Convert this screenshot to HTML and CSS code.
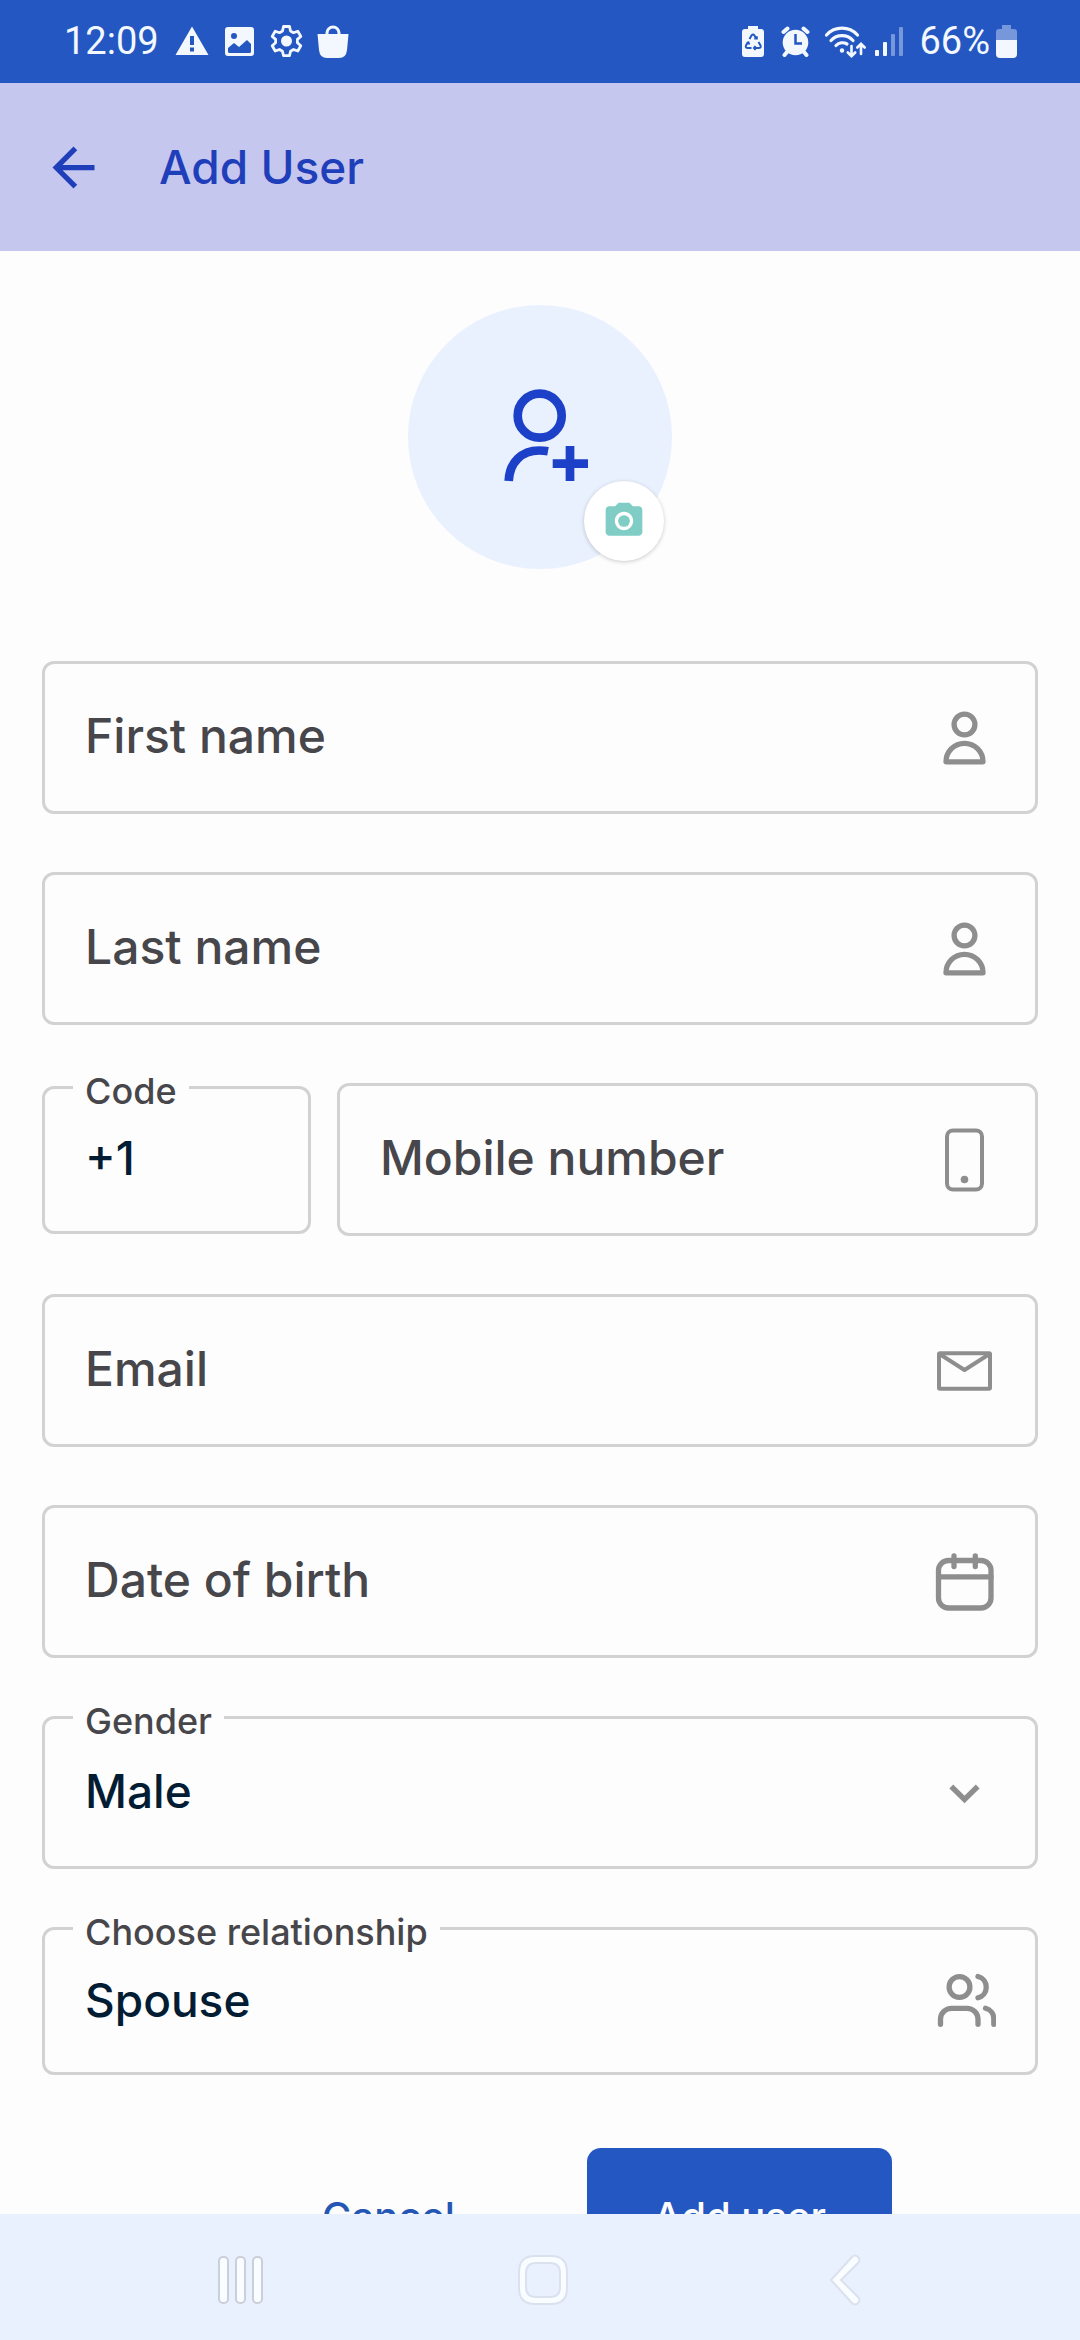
FILE: index.html
```
<!doctype html>
<html lang="en">
  <head>
    <meta charset="UTF-8" />
    <meta name="viewport" content="width=device-width, initial-scale=1.0" />
    <title>Add User</title>
    <link rel="stylesheet" href="styles.css">
  </head>
  <body>
    <div class="status-bar">
      <div class="status-group">
        <span class="clock">12:09</span>
        <svg width="34" height="34" viewBox="0 0 34 34">
          <path fill="currentColor" fill-rule="evenodd" d="M17 2.500 33.500 31H.5zM15 12v9h4v-9zM15 23.500v4h4v-4z" />
        </svg>
        <svg width="34" height="34" viewBox="0 0 34 34">
          <path fill="currentColor" fill-rule="evenodd" d="M6 3h23a3 3 0 0 1 3 3v23a3 3 0 0 1-3 3H6a3 3 0 0 1-3-3V6a3 3 0 0 1 3-3zM12 9a3 3 0 1 0 0 6 3 3 0 0 0 0-6zM6 24v3.500q0 1.500 1.500 1.500h20q1.500 0 1.500-1.500V20l-4-4-8 7-5-4z" />
        </svg>
        <svg width="34" height="34" viewBox="0 0 34 34" fill="none" stroke="currentColor" stroke-linejoin="round">
          <path stroke-width="2.800" d="M14.500 2.500h6l1 4.500 3 1.700 4.300-1.500 3 5.200-3.400 3v3.400l3.400 3-3 5.200-4.300-1.500-3 1.700-1 4.500h-6l-1-4.500-3-1.700-4.300 1.500-3-5.200 3.400-3v-3.400l-3.400-3 3-5.200 4.300 1.500 3-1.700z" />
          <circle cx="17.500" cy="17" r="5.500" fill="currentColor" stroke="none" />
        </svg>
        <svg width="34" height="34" viewBox="0 0 34 34">
          <path fill="currentColor" d="M1.500 10h31l-1.500 16q-.8 8-8 8H11q-7.200 0-8-8z" />
          <path fill="none" stroke="currentColor" stroke-width="3" d="M11 11V9a6 6 0 0 1 12 0v2" />
        </svg>
      </div>
      <div class="status-group right">
        <svg width="28" height="34" viewBox="0 0 28 34">
          <path fill="currentColor" d="M7 2h10v3h3q3 0 3 3v22q0 3-3 3H4q-3 0-3-3V8q0-3 3-3h3z" />
          <path class="cutout" stroke-width="2" d="M8.500 15l2-3.500q1.500-2 3 0l2 3.500M17.500 18l2 3.500q1 2.500-2 2.500H14M10.500 24H7q-3 0-2-2.500L7 18M14.500 22l-1.500 2 1.500 2M5.500 19.500l2-1 .8 2M13.300 14.500h2.500v-2.300" />
        </svg>
        <svg width="30" height="34" viewBox="0 0 30 34">
          <circle cx="14.500" cy="18.500" r="12.800" fill="currentColor" />
          <path fill="none" stroke="currentColor" stroke-width="4" stroke-linecap="round" d="M2.500 8l4-3.500M26.500 8l-4-3.500M6 28l-2.500 3M23 28l2.500 3" />
          <path class="cutout" stroke-width="2.500" d="M14.500 10v9.500h6.500" />
        </svg>
        <svg class="wifi" width="40" height="34" viewBox="0 0 40 34" fill="none" stroke="currentColor" stroke-linecap="round">
          <path stroke-width="3.200" d="M3.500 11a21 21 0 0 1 31 0M8 16.500a15 15 0 0 1 22 0M13 21.500a9 9 0 0 1 11-1.500" />
          <circle cx="19" cy="26.500" r="2.200" fill="currentColor" stroke="none" />
          <path stroke-width="2.600" d="M28.500 22v10M24.800 28.500l3.700 3.700 3.700-3.700M38 30V20M34.300 23.500l3.700-3.700 3.700 3.700" />
        </svg>
        <svg width="32" height="34" viewBox="0 0 32 34" fill="currentColor">
          <rect x="0" y="26" width="4" height="6" rx="1" />
          <rect x="8" y="18" width="4" height="14" rx="1" />
          <rect x="16" y="10" width="4" height="22" rx="1" opacity=".4" />
          <rect x="24" y="3" width="4" height="29" rx="1" opacity=".4" />
        </svg>
        <span class="battery">
          66%
          <svg width="22" height="34" viewBox="0 0 22 34" fill="currentColor">
            <path opacity=".4" d="M6 1h9v4h3q3 0 3 3v8H0V8q0-3 3-3h3z" />
            <path d="M0 16h21v14q0 4-4 4H4q-4 0-4-4z" />
          </svg>
        </span>
      </div>
    </div>

    <header class="app-bar">
      <button class="back" type="button" aria-label="Back">
        <svg width="63" height="63" viewBox="0 0 24 24" fill="currentColor">
          <path d="M20 11H7.830l5.590-5.590L12 4l-8 8 8 8 1.410-1.410L7.830 13H20z" />
        </svg>
      </button>
      <h1 class="title">Add User</h1>
    </header>

    <main class="content">
      <div class="avatar">
        <svg width="100" height="100" viewBox="0 0 100 100" fill="none" stroke="currentColor" stroke-width="8.700">
          <circle cx="49.700" cy="28.700" r="22" />
          <path d="M18.700 94C19.500 75 32 63.500 49 63.500q4.500 0 9 .8M62.700 76.700H98M80 59v35" />
        </svg>
        <button class="photo-btn" type="button" aria-label="Add photo">
          <svg width="44" height="44" viewBox="0 0 24 24" fill="currentColor">
            <circle cx="12" cy="12" r="3.200" />
            <path d="M9 2 7.170 4H4c-1.100 0-2 .9-2 2v12c0 1.100.9 2 2 2h16c1.100 0 2-.9 2-2V6c0-1.100-.9-2-2-2h-3.170L15 2zm3 15c-2.760 0-5-2.240-5-5s2.240-5 5-5 5 2.240 5 5-2.240 5-5 5z" />
          </svg>
        </button>
      </div>

      <form class="form">
        <div class="field">
          <input id="firstName" type="text" placeholder=" " />
          <label for="firstName">First name</label>
          <svg class="icon" viewBox="0 0 64 64">
            <circle cx="32.500" cy="18.500" r="10.400" />
            <path d="M14 55.800a18.500 18.500 0 0 1 37 0z" />
          </svg>
        </div>

        <div class="field">
          <input id="lastName" type="text" placeholder=" " />
          <label for="lastName">Last name</label>
          <svg class="icon" viewBox="0 0 64 64">
            <circle cx="32.500" cy="18.500" r="10.400" />
            <path d="M14 55.800a18.500 18.500 0 0 1 37 0z" />
          </svg>
        </div>

        <div class="field-row">
          <div class="field short code">
            <input id="code" type="text" placeholder=" " value="+1" />
            <label for="code">Code</label>
          </div>
          <div class="field mobile">
            <input id="mobile" type="tel" placeholder=" " />
            <label for="mobile">Mobile number</label>
            <svg class="icon thin" viewBox="0 0 64 64">
              <rect x="15" y="2.500" width="35" height="59" rx="6" />
              <circle class="dot" cx="32.500" cy="51.500" r="3.800" />
            </svg>
          </div>
        </div>

        <div class="field">
          <input id="email" type="email" placeholder=" " />
          <label for="email">Email</label>
          <svg class="icon thin" viewBox="0 0 64 64">
            <rect x="7" y="14.300" width="51" height="35.500" rx="1" />
            <path d="M7.500 15 32.500 31 57.500 15" />
          </svg>
        </div>

        <div class="field">
          <input id="birth" type="text" placeholder=" " />
          <label for="birth">Date of birth</label>
          <svg class="icon" viewBox="0 0 64 64">
            <rect x="6.500" y="10.500" width="52.500" height="47.500" rx="10" />
            <path d="M7 26.800h52M22 6v10.500M43.300 6v10.500" />
          </svg>
        </div>

        <div class="field">
          <select id="gender">
            <option>Male</option>
            <option>Female</option>
          </select>
          <label for="gender">Gender</label>
          <svg class="icon chevron" viewBox="0 0 64 64">
            <path d="M19.300 25.500l13.200 13 13.200-13" />
          </svg>
        </div>

        <div class="field short">
          <select id="relationship">
            <option>Spouse</option>
            <option>Child</option>
            <option>Parent</option>
          </select>
          <label for="relationship">Choose relationship</label>
          <svg class="icon" viewBox="0 0 64 64">
            <circle cx="27.500" cy="18" r="10.400" />
            <path d="M8.500 55.300V50a11 11 0 0 1 11-10.700h15.500a11 11 0 0 1 11 10.700v5.300M46 7.500a11 11 0 0 1 0 21.300M53.500 39.300a11 11 0 0 1 8.300 10.700v5.300" />
          </svg>
        </div>

        <div class="actions">
          <button class="btn" type="button">Cancel</button>
          <button class="btn primary" type="submit">Add user</button>
        </div>
      </form>
    </main>

    <nav class="nav-bar">
      <button type="button" aria-label="Recent apps">
        <svg width="52" height="52" viewBox="0 0 52 52">
          <rect x="4" y="3" width="9" height="46" rx="4" />
          <rect x="21" y="3" width="9" height="46" rx="4" />
          <rect x="38" y="3" width="9" height="46" rx="4" />
        </svg>
      </button>
      <button type="button" aria-label="Home">
        <svg class="light" width="52" height="52" viewBox="0 0 52 52">
          <path fill-rule="evenodd" d="M18 2h16q16 0 16 16v16q0 16-16 16H18Q2 50 2 34V18Q2 2 18 2zM19 9q-10 0-10 10v14q0 10 10 10h14q10 0 10-10V19q0-10-10-10z" />
        </svg>
      </button>
      <button type="button" aria-label="Back">
        <svg class="light" width="52" height="52" viewBox="0 0 52 52">
          <path d="M33 3q3-3 6 0t0 6L22 26l17 17q3 3 0 6t-6 0L12 26z" />
        </svg>
      </button>
    </nav>
  </body>
</html>
```
FILE: styles.css
```
* {
  box-sizing: border-box;
}
body {
  margin: 0;
  height: 100vh;
  display: flex;
  flex-direction: column;
  background: #fdfdfd;
  color: #47464b;
  font-family: Inter, Roboto, sans-serif;
  font-size: 46px;
  font-weight: 500;
}
button,
input,
select {
  font: inherit;
  color: inherit;
  background: none;
  border: none;
  margin: 0;
  padding: 0;
}
svg {
  display: block;
  flex: none;
}

/* status bar */
.status-bar {
  flex: none;
  display: flex;
  justify-content: space-between;
  height: 83px;
  padding: 0 62px 2px 64px;
  background: #2457c2;
  color: #f3f8ff;
  font: 400 38px Roboto, sans-serif;
}
.status-group {
  display: flex;
  align-items: center;
  gap: 13px;
}
.status-group.right {
  gap: 12px;
}
.battery {
  display: flex;
  align-items: center;
  gap: 6px;
}
.clock {
  margin-right: 3px;
}
.wifi {
  overflow: visible;
}
.cutout {
  fill: none;
  stroke: #2457c2;
}

/* header */
.app-bar {
  flex: none;
  display: flex;
  align-items: center;
  gap: 54px;
  height: 168px;
  padding: 0 42px;
  background: #c6c7ef;
  color: #1f3fba;
}
.title {
  margin: 0;
  font-size: 46px;
  font-weight: 500;
}

.content {
  flex: 1;
  min-height: 0;
  overflow: hidden;
  padding: 54px 42px 0;
}
.avatar {
  position: relative;
  display: flex;
  align-items: center;
  justify-content: center;
  width: 264px;
  height: 264px;
  margin: 0 auto 92px;
  border-radius: 50%;
  background: #e9f0fe;
  color: #1c40c8;
}
.photo-btn {
  position: absolute;
  right: 8px;
  bottom: 8px;
  display: flex;
  align-items: center;
  justify-content: center;
  width: 80px;
  height: 80px;
  border-radius: 50%;
  background: #fff;
  color: #80cdc6;
  box-shadow: 0 1px 4px rgba(0, 0, 0, 0.2);
}

/* form */
.form {
  display: flex;
  flex-direction: column;
  gap: 58px;
}
.field-row {
  display: flex;
  align-items: center;
  gap: 26px;
}
.field {
  position: relative;
  display: grid;
  grid-template-columns: 1fr auto;
  align-items: center;
  height: 153px;
  padding: 0 39px 0 40px;
  border: 3px solid #d2d2d2;
  border-radius: 12px;
}
.field.short {
  height: 148px;
}
.field.code {
  flex: 0 0 27%;
}
.field.mobile {
  flex: 1;
  min-width: 0;
}
.field input,
.field select {
  grid-area: 1 / 1;
  width: 100%;
  min-width: 0;
  height: 100%;
  padding-bottom: 3px;
  appearance: none;
  outline: none;
  color: #021c33;
}
/* floating label, sits over the border */
.field label {
  position: absolute;
  left: 28px;
  top: -16px;
  padding: 0 12px;
  line-height: 36px;
  font-size: 36px;
  background: #fdfdfd;
}
/* empty field: label rests in the middle */
.field input:placeholder-shown:not(:focus) + label {
  position: static;
  grid-area: 1 / 1;
  padding: 0 0 3px;
  font-size: 48px;
  line-height: 56px;
  background: none;
  pointer-events: none;
}
.icon {
  grid-area: 1 / 2;
  width: 64px;
  height: 64px;
  fill: none;
  stroke: #8e8e8e;
  stroke-width: 5.3;
  stroke-linecap: round;
  stroke-linejoin: round;
  pointer-events: none;
}
.icon.thin {
  stroke-width: 4;
}
.icon.chevron {
  stroke-linecap: butt;
  stroke-linejoin: miter;
}
.icon .dot {
  fill: #8e8e8e;
  stroke: none;
}

.actions {
  display: flex;
  justify-content: center;
  gap: 46px;
  margin-top: 15px;
  padding-left: 48px;
}
.btn {
  width: 305px;
  height: 136px;
  border-radius: 14px;
  font-size: 40px;
  color: #2456b4;
}
.btn.primary {
  background: #2457c2;
  color: #fff;
}

/* system navigation */
.nav-bar {
  flex: none;
  display: flex;
  height: 126px;
  padding: 6px 84px 0 90px;
  background: #e9f0fe;
}
.nav-bar button {
  flex: 1;
  display: flex;
  align-items: center;
  justify-content: center;
}
.nav-bar svg {
  fill: #fafdff;
  stroke: #c9d0d8;
  stroke-width: 2;
}
.nav-bar .light {
  stroke: #dbe2ee;
}
```
